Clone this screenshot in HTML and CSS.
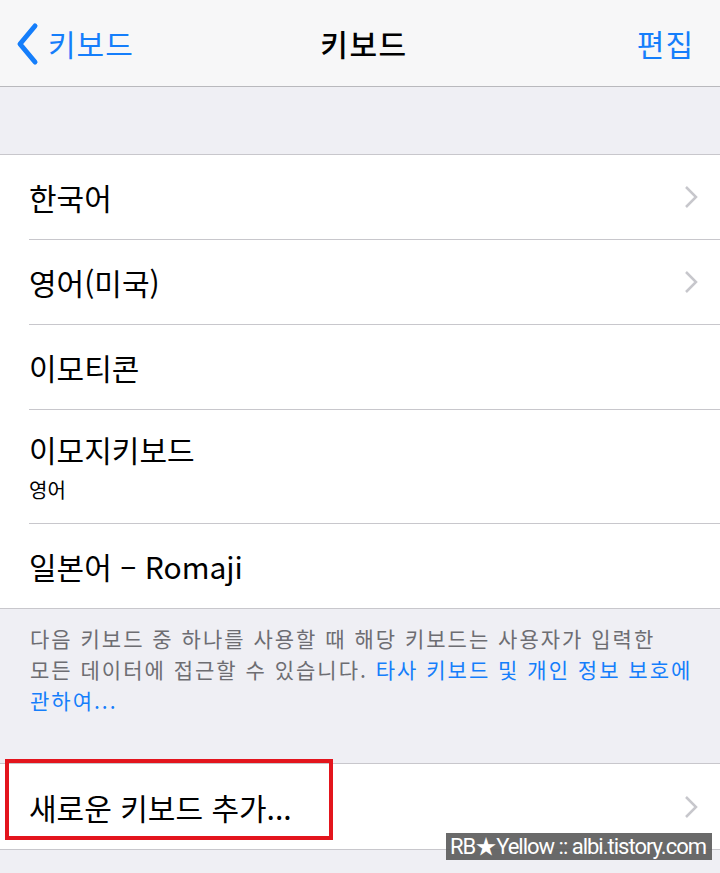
FILE: index.html
```html
<!DOCTYPE html>
<html lang="ko">
<head>
  <meta charset="UTF-8" />
  <meta name="viewport" content="width=device-width, initial-scale=1.0" />
  <title>키보드</title>
  <link rel="stylesheet" href="styles.css">
</head>
<body>
  <div class="navbar">
    <a class="back" href="#">
      <svg class="back-icon" width="26" height="44" viewBox="0 0 26 44"><path d="M21 4 L6 22 L21 40" fill="none" stroke="#157efb" stroke-width="5" stroke-linecap="round" stroke-linejoin="round"/></svg>
      <span>키보드</span>
    </a>
    <div class="title">키보드</div>
    <a class="edit" href="#">편집</a>
  </div>

  <div class="spacer"></div>

  <div class="group">
    <div class="row">
      <span class="label">한국어</span>
      <svg class="chevron" width="14" height="24" viewBox="0 0 14 24"><path d="M2 2 L12 12 L2 22" fill="none" stroke="#c7c7cc" stroke-width="2.5"/></svg>
    </div>
    <div class="row">
      <span class="label">영어(미국)</span>
      <svg class="chevron" width="14" height="24" viewBox="0 0 14 24"><path d="M2 2 L12 12 L2 22" fill="none" stroke="#c7c7cc" stroke-width="2.5"/></svg>
    </div>
    <div class="row">
      <span class="label">이모티콘</span>
    </div>
    <div class="row tall">
      <div>
        <div class="label">이모지키보드</div>
        <div class="sub">영어</div>
      </div>
    </div>
    <div class="row">
      <span class="label">일본어 – Romaji</span>
    </div>
  </div>

  <p class="footer">다음 키보드 중 하나를 사용할 때 해당 키보드는 사용자가 입력한<br>모든 데이터에 접근할 수 있습니다. <a href="#">타사 키보드 및 개인 정보 보호에<br>관하여...</a></p>

  <div class="group add-group">
    <div class="row add">
      <span class="label">새로운 키보드 추가...</span>
      <svg class="chevron" width="14" height="24" viewBox="0 0 14 24"><path d="M2 2 L12 12 L2 22" fill="none" stroke="#c7c7cc" stroke-width="2.5"/></svg>
      <div class="highlight"></div>
    </div>
  </div>

  <div class="watermark">RB★Yellow :: albi.tistory.com</div>
</body>
</html>
```

FILE: styles.css
```css
body {
  margin: 0;
  padding: 0;
  height: 873px;
  overflow: hidden;
  background: #efeff4;
  font-family: "Noto Sans CJK KR", "Noto Sans", sans-serif;
  color: #000;
  position: relative;
}
a {
  color: #157efb;
  text-decoration: none;
}
.navbar {
  height: 86px;
  background: #f7f7f8;
  border-bottom: 1px solid #b9b9bd;
  display: flex;
  align-items: center;
  justify-content: space-between;
  padding: 0 26px 0 14px;
  position: relative;
}
.back {
  display: flex;
  align-items: center;
  gap: 8px;
  font-size: 30px;
  letter-spacing: 1px;
}
.back-icon {
  margin-top: 1px;
}
.title {
  position: absolute;
  left: 0;
  right: 0;
  text-align: center;
  font-size: 30px;
  font-weight: 500;
  letter-spacing: 1.5px;
  margin-left: 8px;
  pointer-events: none;
}
.edit {
  font-size: 30px;
  letter-spacing: 1px;
}
.spacer {
  height: 67px;
}
.group {
  background: #fff;
  border-top: 1px solid #c8c7cc;
  border-bottom: 1px solid #c8c7cc;
}
.row {
  height: 84px;
  margin-left: 29px;
  padding-right: 22px;
  display: flex;
  align-items: center;
  justify-content: space-between;
  border-bottom: 1px solid #c8c7cc;
  position: relative;
}
.row:last-child {
  border-bottom: none;
}
.row.tall {
  height: 113px;
}
.label {
  font-size: 30px;
  line-height: 40px;
}
.sub {
  font-size: 20px;
  line-height: 30px;
  margin-top: 6px;
}
.footer {
  margin: 0;
  padding: 14px 0 47px 30px;
  font-size: 21px;
  line-height: 31px;
  letter-spacing: 2px;
  color: #6d6d72;
  white-space: nowrap;
}
.add {
  height: 85px;
}
.highlight {
  position: absolute;
  left: -24px;
  top: -5px;
  width: 320px;
  height: 73px;
  border: 4px solid #e3151d;
}
.watermark {
  position: absolute;
  right: 8px;
  top: 833px;
  height: 27px;
  padding: 0 6px 0 4px;
  background: rgba(90, 90, 90, 0.9);
  color: #fff;
  font-family: Roboto, "Noto Sans", sans-serif;
  font-size: 22px;
  line-height: 27px;
  letter-spacing: -1px;
  white-space: nowrap;
}
```
